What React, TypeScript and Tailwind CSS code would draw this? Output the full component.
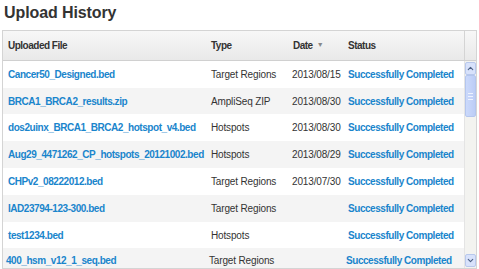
import { ChevronDown, ChevronUp } from "lucide-react";

type Upload = {
  file: string;
  type: string;
  date: string;
};

const uploads: Upload[] = [
  { file: "Cancer50_Designed.bed", type: "Target Regions", date: "2013/08/15" },
  { file: "BRCA1_BRCA2_results.zip", type: "AmpliSeq ZIP", date: "2013/08/30" },
  { file: "dos2uinx_BRCA1_BRCA2_hotspot_v4.bed", type: "Hotspots", date: "2013/08/30" },
  { file: "Aug29_4471262_CP_hotspots_20121002.bed", type: "Hotspots", date: "2013/08/29" },
  { file: "CHPv2_08222012.bed", type: "Target Regions", date: "2013/07/30" },
  { file: "IAD23794-123-300.bed", type: "Target Regions", date: "" },
  { file: "test1234.bed", type: "Hotspots", date: "" },
  { file: "400_hsm_v12_1_seq.bed", type: "Target Regions", date: "" },
];

const rowHeights = ["h-[27px]", "h-[26px]", "h-[27px]", "h-[27px]", "h-[27px]", "h-[27px]", "h-[26px]", "h-[22px]"];

export default function App() {
  return (
    <div className="w-[479px] h-[269px] overflow-hidden bg-white font-['Liberation_Sans',Arial,sans-serif] text-[#333]">
      {/* Title */}
      <h2 className="h-[30px] pl-[4px] pt-[2px] text-[16px] tracking-[-0.1px] font-bold leading-[22px] text-[#333]">
        Upload History
      </h2>

      {/* Grid */}
      <div className="ml-[2px] w-[475px] h-[239px] border border-[#d4d4d4] flex flex-col overflow-hidden">
        {/* Header */}
        <div className="flex h-[30px] shrink-0 border-b border-[#d0d0d0] bg-gradient-to-b from-[#f7f7f7] to-[#e9e9e9] text-[10px] tracking-[-0.5px] font-bold">
          <div className="flex flex-1 items-center">
            <div className="w-[208px] pl-[5px]">Uploaded File</div>
            <div className="w-[82px]">Type</div>
            <div className="flex w-[55px] items-center gap-[4px]">
              Date
              <span className="text-[7px] text-[#888]">▼</span>
            </div>
            <div>Status</div>
          </div>
          <div className="w-[12px] border-l border-[#d4d4d4]" />
        </div>

        {/* Body */}
        <div className="flex flex-1 min-h-0">
          <div className="flex-1 flex flex-col">
            {uploads.map((u, i) => (
              <div
                key={u.file}
                className={`flex shrink-0 items-center text-[10px] ${rowHeights[i]} ${
                  i % 2 === 1 ? "bg-[#f4f4f4]" : "bg-white"
                } ${i === uploads.length - 1 ? "-ml-[2px] pt-[3px]" : ""}`}
              >
                <div className="w-[208px] pl-[5px] font-bold tracking-[-0.45px] text-[#1a85cc] whitespace-nowrap">{u.file}</div>
                <div className="w-[81px] tracking-[-0.15px] whitespace-nowrap">{u.type}</div>
                <div className="w-[56px] tracking-[-0.15px]">{u.date}</div>
                <div className="font-bold tracking-[-0.45px] text-[#1a85cc] whitespace-nowrap">Successfully Completed</div>
              </div>
            ))}
          </div>

          {/* Scrollbar */}
          <div className="w-[12px] flex flex-col bg-[#f3f3f0] border-l border-[#e4e4e4]">
            <div className="h-[13px] mt-[1px] flex items-center justify-center rounded-[2px] border border-[#b8c8ec] bg-[#d8e2fb] text-[#4d6185]">
              <ChevronUp size={9} strokeWidth={3} />
            </div>
            <div className="h-[42px] flex flex-col items-center justify-center gap-[2px] rounded-[2px] border border-[#b4c6ee] bg-gradient-to-r from-[#cbd9fb] to-[#bccdf6]">
              <span className="block h-px w-[5px] bg-[#eef3ff]" />
              <span className="block h-px w-[5px] bg-[#eef3ff]" />
              <span className="block h-px w-[5px] bg-[#eef3ff]" />
            </div>
            <div className="flex-1" />
            <div className="h-[13px] mb-[1px] flex items-center justify-center rounded-[2px] border border-[#b8c8ec] bg-[#d8e2fb] text-[#4d6185]">
              <ChevronDown size={9} strokeWidth={3} />
            </div>
          </div>
        </div>
      </div>
    </div>
  );
}
